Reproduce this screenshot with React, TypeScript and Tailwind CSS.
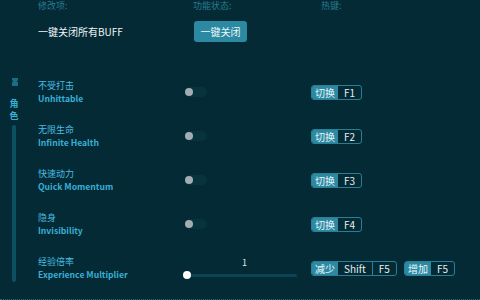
import React from "react";

const FONT = { fontFamily: '"Noto Sans CJK SC", "Noto Sans", sans-serif' };

function Toggle() {
  return (
    <div className="relative w-[22px] h-[10px] rounded-full bg-[#07333f] ml-[-2px]">
      <div className="absolute left-[0px] top-[1px] w-[8px] h-[8px] rounded-full bg-[#a3adb3]" />
    </div>
  );
}

function Key({ label, keys }: { label: string; keys: string[] }) {
  return (
    <div className="flex h-[15px] rounded-[3px] border border-[#2a7f95] overflow-hidden text-[10px] leading-[13px]">
      <div className="bg-[#2b8aa2] text-[#e8f6fa] px-[3px] flex items-center">{label}</div>
      {keys.map((k, i) => (
        <div
          key={i}
          className={`flex items-center px-[6px] text-[#e3eef2] ${i > 0 ? "border-l border-[#2a7f95]" : ""}`}
        >
          {k}
        </div>
      ))}
    </div>
  );
}

const rows = [
  { cn: "不受打击", en: "Unhittable", key: "F1" },
  { cn: "无限生命", en: "Infinite Health", key: "F2" },
  { cn: "快速动力", en: "Quick Momentum", key: "F3" },
  { cn: "隐身", en: "Invisibility", key: "F4" },
];

function Title({ cn, en }: { cn: string; en: string }) {
  return (
    <div className="w-[149px] flex flex-col">
      <div className="text-[9px] leading-[13px] text-[#4cbde0]">{cn}</div>
      <div className="text-[8.6px] leading-[13px] font-bold text-[#3aaed4]">{en}</div>
    </div>
  );
}

export default function App() {
  return (
    <div className="w-[480px] h-[300px] bg-[#032a35] overflow-hidden relative flex flex-col" style={FONT}>
      <div className="flex h-[11px] pl-[38px] pt-[1px] text-[9px] leading-[10px] text-[#2a7a90]">
        <div className="w-[155px]">修改项:</div>
        <div className="w-[128px]">功能状态:</div>
        <div>热键:</div>
      </div>
      <div className="flex items-center pl-[38px] mt-[10px] h-[21px]">
        <div className="w-[156px] text-[10px] text-[#eef6f8]">一键关闭所有BUFF</div>
        <div className="h-[21px] w-[53px] rounded-[3px] bg-[#2b8aa2] text-[10px] text-[#eef6f8] flex items-center justify-center">
          一键关闭
        </div>
      </div>
      <div className="flex mt-[28px]">
        <div className="w-[38px] flex flex-col items-center pt-[8px] pr-[10px]">
          <svg width="8" height="8" viewBox="0 0 8 8" className="ml-[1px]">
            <path d="M1 0h6v2l-1.2 1.2 1.2 1.3V8H1V4.5l1.2-1.3L1 2z" fill="#1a6e84" />
          </svg>
          <div className="mt-[12px] text-[9px] leading-[12px] text-[#3aaed4] font-bold">角</div>
          <div className="text-[9px] leading-[12px] text-[#3aaed4] font-bold">色</div>
          <div className="mt-[3px] w-[4px] h-[157px] rounded-full bg-[#0d5062]" />
        </div>
        <div className="flex flex-col">
          {rows.map((r) => (
            <div key={r.key} className="flex items-center h-[44px]">
              <Title cn={r.cn} en={r.en} />
              <div className="w-[124px] flex items-center pb-[1px]">
                <Toggle />
              </div>
              <Key label="切换" keys={[r.key]} />
            </div>
          ))}
          <div className="flex items-center h-[44px]">
            <Title cn="经验倍率" en="Experience Multiplier" />
            <div className="w-[124px] flex flex-col pt-[1px]">
              <div className="text-[9px] leading-[10px] text-[#dfeaee] pl-[55px]">1</div>
              <div className="relative mt-[3px] h-[8px] w-[114px] ml-[-4px] flex items-center">
                <div className="w-full h-[3px] rounded-full bg-[#0b4454]" />
                <div className="absolute left-[0px] top-0 w-[8px] h-[8px] rounded-full bg-white" />
              </div>
            </div>
            <div className="flex gap-[7px]">
              <Key label="减少" keys={["Shift", "F5"]} />
              <Key label="增加" keys={["F5"]} />
            </div>
          </div>
        </div>
      </div>
      <div className="absolute left-0 right-0 bottom-0 border-b border-dotted border-[#2a6878]" />
    </div>
  );
}
